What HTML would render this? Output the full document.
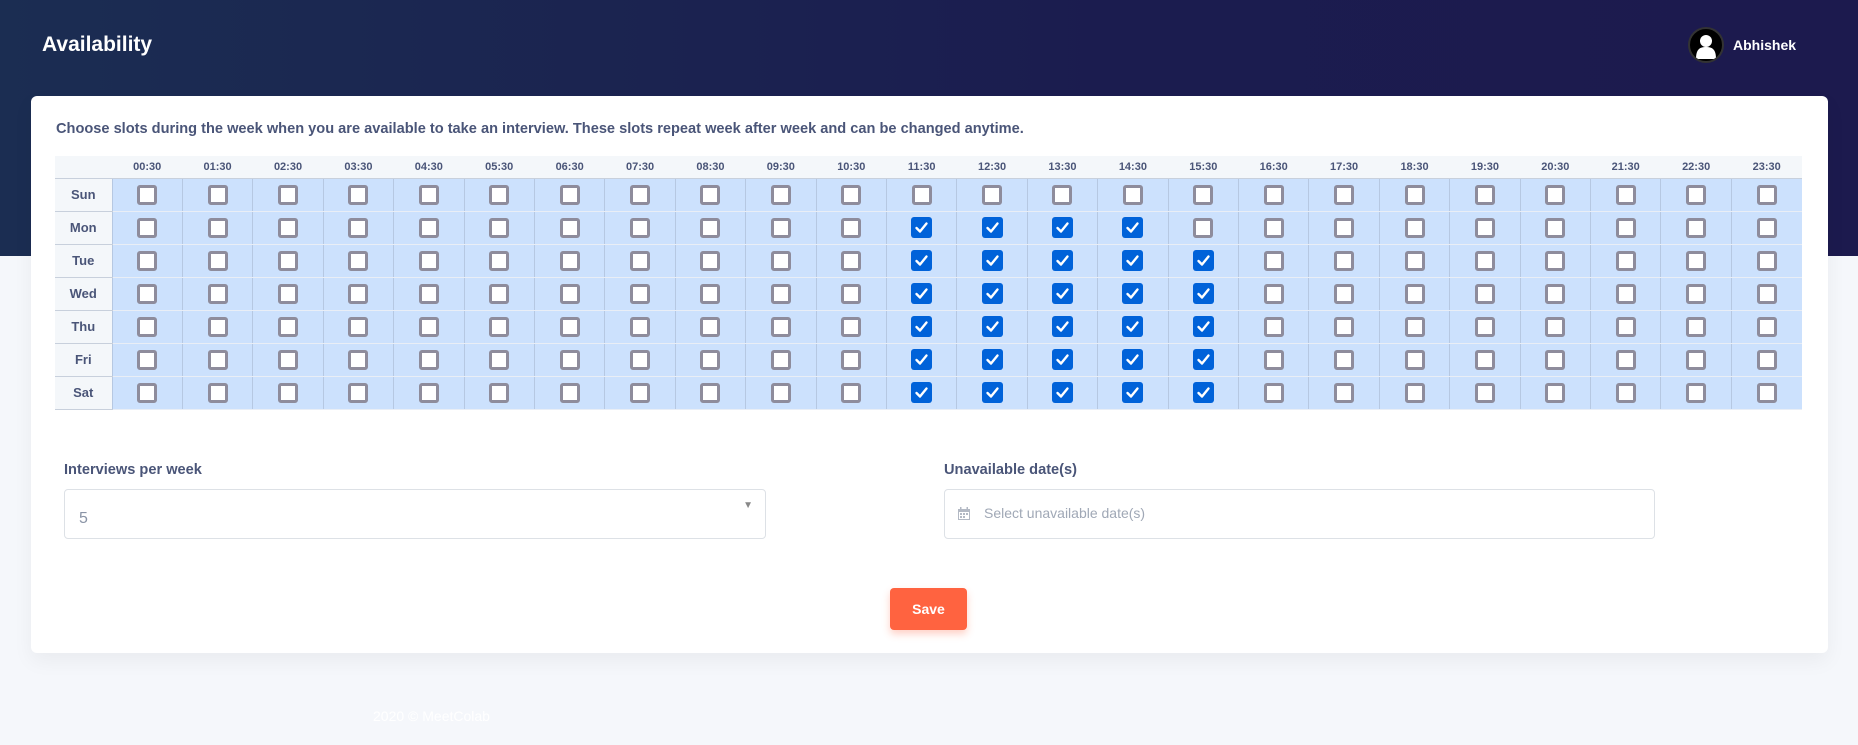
<!DOCTYPE html>
<html><head><meta charset="utf-8"><style>
*{box-sizing:border-box;margin:0;padding:0}
body{width:1858px;height:745px;overflow:hidden;background:#f5f7fb;font-family:"Liberation Sans",sans-serif;position:relative}
.hdr{position:absolute;left:0;top:0;width:1858px;height:256px;background:linear-gradient(90deg,#1b2d52,#1b1c4f 60%,#1c1a4e)}
.title{position:absolute;left:42px;top:33px;color:#fff;font-size:21px;font-weight:bold}
.av{position:absolute;left:1688px;top:27px;width:36px;height:36px;border-radius:50%;background:#000;border:2px solid #333;overflow:hidden}
.uname{position:absolute;left:1733px;top:37px;color:#fff;font-size:14px;font-weight:bold}
.card{position:absolute;left:31px;top:96px;width:1797px;height:557px;background:#fff;border-radius:6px;box-shadow:0 8px 20px rgba(0,0,0,.05)}
.desc{position:absolute;left:56px;top:121px;font-size:14.6px;font-weight:bold;color:#4a5578}
table{position:absolute;left:55px;top:156px;border-collapse:collapse;table-layout:fixed;width:1747px}
th{height:22px;background:#f4f7fa;font-size:11px;color:#4a5578;font-weight:900;border-bottom:1px solid #c8d0dc}
td{height:33px;background:#cce1fd;text-align:center;border-left:1px solid #b6c8e2;border-bottom:1px solid #e9eef6}
td.d{background:#f4f7fa;font-weight:900;font-size:13px;color:#4a5578;border-left:none;border-bottom:1px solid #c8d0dc}
.cb{display:inline-block;width:20px;height:20px;border:3px solid #8e8c9c;background:#fff;border-radius:3px;vertical-align:middle}
.ck{display:inline-block;width:21px;height:21px;background:#0062d9;border-radius:3px;vertical-align:middle;position:relative}
.ck svg{position:absolute;left:3px;top:3px}
.lbl{position:absolute;font-size:14.6px;font-weight:bold;color:#4a5578}
.box{position:absolute;border:1px solid #dde1e6;border-radius:4px;background:#fff}
.save{position:absolute;left:890px;top:588px;width:77px;height:42px;background:#ff6340;border-radius:4px;color:#fff;font-weight:bold;font-size:14px;text-align:center;line-height:42px;box-shadow:0 4px 8px rgba(255,99,64,.3)}
.foot{position:absolute;left:373px;top:708px;color:#fff;font-size:14px}
</style></head><body>
<div class="hdr"></div>
<div class="title">Availability</div>
<div class="av"><svg width="32" height="32" viewBox="0 0 32 32"><circle cx="16" cy="12" r="6" fill="#fff"/><path d="M6 30 C6 20 10 18 16 18 C22 18 26 20 26 30Z" fill="#fff"/></svg></div>
<div class="uname">Abhishek</div>
<div class="card"></div>
<div class="desc">Choose slots during the week when you are available to take an interview. These slots repeat week after week and can be changed anytime.</div>
<table id="t"><colgroup><col style="width:57px"></colgroup></table>
<div class="lbl" style="left:64px;top:462px">Interviews per week</div>
<div class="box" style="left:64px;top:489px;width:702px;height:50px"><span style="position:absolute;left:14px;top:20px;color:#8a94a6;font-size:16px">5</span><span style="position:absolute;right:12px;top:10px;color:#888;font-size:10px">▼</span></div>
<div class="lbl" style="left:944px;top:462px">Unavailable date(s)</div>
<div class="box" style="left:944px;top:489px;width:711px;height:50px"><svg style="position:absolute;left:12px;top:17px" width="14" height="14" viewBox="0 0 14 14"><rect x="1" y="2" width="12" height="11" fill="#b3b9c4"/><rect x="2" y="5" width="10" height="7" fill="#fff"/><g fill="#b3b9c4"><rect x="3" y="6" width="2" height="2"/><rect x="6" y="6" width="2" height="2"/><rect x="9" y="6" width="2" height="2"/><rect x="3" y="9" width="2" height="2"/><rect x="6" y="9" width="2" height="2"/></g><rect x="3" y="0" width="1.5" height="3" fill="#b3b9c4"/><rect x="9.5" y="0" width="1.5" height="3" fill="#b3b9c4"/></svg><span style="position:absolute;left:39px;top:15px;color:#a0a8b6;font-size:14px">Select unavailable date(s)</span></div>
<div class="save">Save</div>
<div class="foot">2020 © MeetColab</div>
<script>
var t=document.getElementById('t'),h='<tr><th></th>';
for(var i=0;i<24;i++)h+='<th>'+(i<10?'0':'')+i+':30</th>';h+='</tr>';
var days=['Sun','Mon','Tue','Wed','Thu','Fri','Sat'];
var chk='<span class="ck"><svg width="15" height="15" viewBox="0 0 15 15"><path d="M2.5 8 L6 11.5 L12.5 3.5" stroke="#fff" stroke-width="2.4" fill="none" stroke-linecap="round" stroke-linejoin="round"/></svg></span>';
for(var d=0;d<7;d++){h+='<tr><td class="d">'+days[d]+'</td>';for(var i=0;i<24;i++){var c=(d==1&&i>=11&&i<=14)||(d>=2&&i>=11&&i<=15);h+='<td>'+(c?chk:'<span class="cb"></span>')+'</td>';}h+='</tr>';}
t.innerHTML+=h;
</script>
</body></html>
